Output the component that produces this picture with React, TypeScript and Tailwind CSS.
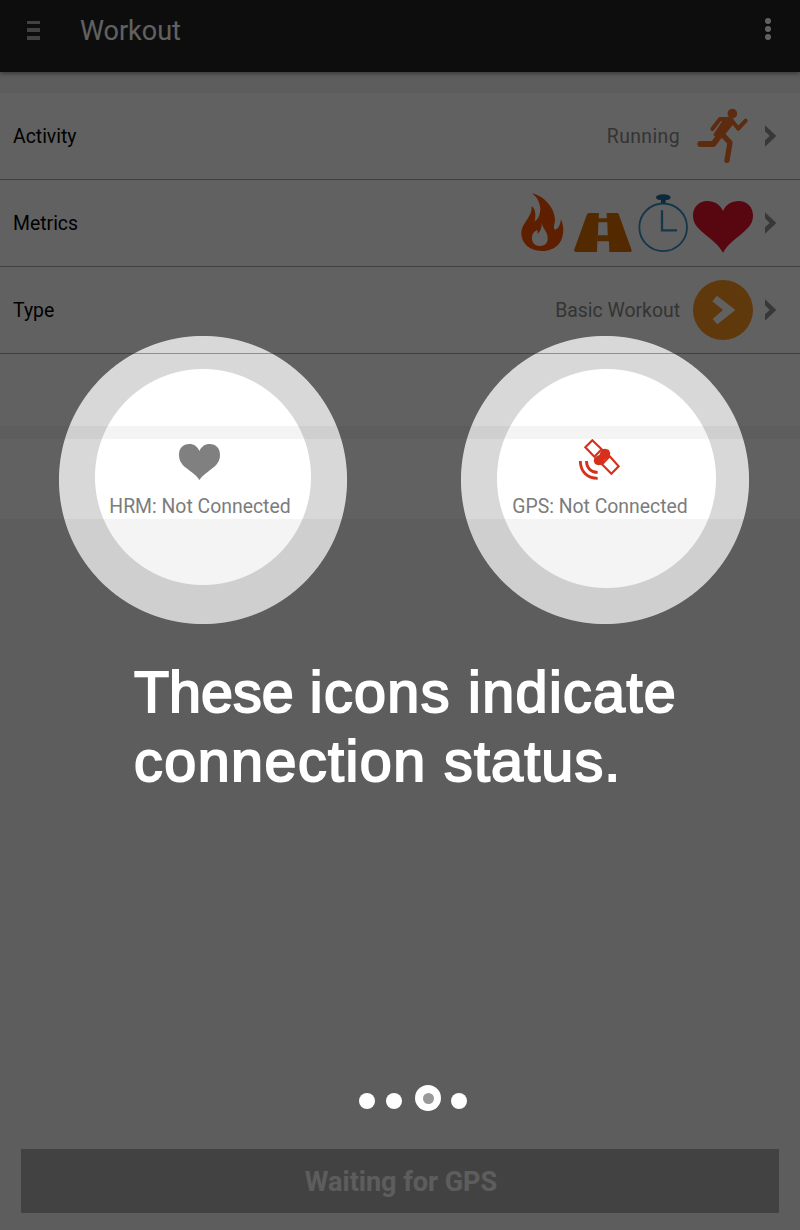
import type { ReactNode } from "react";

function Chevron() {
  return (
    <svg className="ml-3 h-[22px] w-3 shrink-0" viewBox="0 0 36 66" fill="#929292">
      <path d="M0 1 34 33 0 65V46L14 33 0 19Z" />
    </svg>
  );
}

function Row({ label, children }: { label: string; children: ReactNode }) {
  return (
    <div className="flex h-[87px] items-center border-b border-[#a8a8a8] bg-white pr-[23px] pl-[13px]">
      <span className="grow pt-0.5 text-[19.4px] text-black">{label}</span>
      {children}
      <Chevron />
    </div>
  );
}

function RunnerIcon() {
  return (
    <svg className="ml-[13px] h-[60px] w-[60px]" viewBox="579 318 180 180" fill="none" stroke="#f2702a" strokeLinecap="round" strokeLinejoin="round">
      <circle cx="697" cy="341" r="14.5" fill="#f2702a" stroke="none" />
      <path d="M688 357H660L637 387M696 362 715 386 737 362" strokeWidth="12" />
      <path d="M601 432H640L660 405" strokeWidth="18" />
      <path d="M664 400 690 428 681 481" strokeWidth="16" />
      <path d="M674 358 697 358 698 370 670 404 655 415 644 404Z" fill="#f2702a" strokeWidth="7" />
    </svg>
  );
}

function FlameIcon() {
  return (
    <svg className="h-[60px] w-[45px]" viewBox="30 39 135 180" fill="#f85200" fillRule="evenodd">
      <path d="M66 40C98 46 137 82 135 124C131 138 131 149 136 149C145 146 153 132 152 117C162 136 163 160 153 182C143 202 120 213 95 213C64 213 33 194 34 157C35 128 68 111 65 78C76 88 79 104 74 124C84 119 90 106 91 88C90 67 82 53 66 40ZM95 128C98 147 115 156 113 178C112 191 103 198 90 198C75 198 66 189 66 175C66 160 73 154 82 150C83 154 83 158 83 162C91 153 96 143 95 128Z" />
    </svg>
  );
}

function RoadIcon() {
  return (
    <svg className="ml-[9px] h-[60px] w-[58px]" viewBox="192 39 174 180" fill="#db6c00">
      <path d="M236 99H267L266 115V127H265L264 166H263L261 212 260 216H196L192 211 231 103ZM290 99H321Q325 99 326 102L365 211Q366 216 361 216H298L296 166H293L292 127H291Z" />
      <path d="M264 115H294V127H264ZM262 166H297V184H262Z" />
    </svg>
  );
}

function StopwatchIcon() {
  return (
    <svg className="ml-1.5 h-[60px] w-[50px]" viewBox="384 39 150 180" fill="none" stroke="#3490c0">
      <circle cx="459.500" cy="142" r="71.500" strokeWidth="5.500" />
      <path d="M456 91V151H501" strokeWidth="7" />
      <path d="M438 52C440 40 480 40 482 52C482 58 474 60 467 61V70H453V61C446 60 438 58 438 52Z" fill="#236f98" stroke="none" />
    </svg>
  );
}

function HeartIcon() {
  return (
    <svg className="ml-[5px] h-[60px] w-[60px]" viewBox="549 39 180 180" fill="#e8102a">
      <path d="M639 218C626 195 604 178 583 161C561 143 549 130 549 106C549 80 568 63 592 63C613 63 631 74 639 93C647 74 665 63 686 63C710 63 729 80 729 106C729 130 717 143 695 161C674 178 652 195 639 218Z" />
    </svg>
  );
}

function GoIcon() {
  return (
    <svg className="ml-[13px] h-[60px] w-[60px]" viewBox="549 300 180 180">
      <circle cx="639" cy="390" r="90" fill="#fa9620" />
      <path d="M621 347 676 390 622 433 608 417 639 390 607 364Z" fill="#fff" />
    </svg>
  );
}

function HrmIcon() {
  return (
    <svg className="h-[41px] w-[41px]" viewBox="387 342 123 123" fill="#808080">
      <path d="M448 465C440 451 425 443 410 430C395 418 387 407 387 389C387 370 399 357 418 357C432 357 443 365 448 378C454 365 465 357 479 357C498 357 510 370 510 389C510 407 502 418 487 430C472 443 457 451 448 465Z" />
    </svg>
  );
}

function SatelliteIcon() {
  return (
    <svg className="h-[41px] w-[41px]" viewBox="57 42 123 123" fill="none" stroke="#d7301a">
      <path d="M97 46 76 67 103 95 125 73ZM149 94 176 124 154 146 126 118Z" strokeWidth="6.500" />
      <path d="M122 80 126 73 135 71 146 74 151 84 149 94 140 101 134 104 132 112 125 119 115 121 105 117 101 108 103 99 111 93 118 90Z" fill="#d7301a" stroke="none" />
      <path d="M61 108C61 139 81 160 113 160M79.500 108C79.500 128 92 142 113 142" strokeWidth="8.500" />
    </svg>
  );
}

function Status({ text, children }: { text: string; children: ReactNode }) {
  return (
    <div className="flex w-1/2 flex-col items-center">
      <div className="pr-px">{children}</div>
      <span className="mt-[15px] text-[19.400px] leading-6 whitespace-nowrap text-[#7c7c7c]">{text}</span>
    </div>
  );
}

export default function App() {
  return (
    <div className="relative flex h-[1230px] w-[800px] flex-col overflow-hidden bg-[#f4f4f4] font-['Roboto',sans-serif]">
      <header className="z-0 flex h-[72px] shrink-0 items-center bg-[#222] pr-[29px] pb-[11px] pl-[27px] shadow-[0_1px_5px_rgba(0,0,0,0.5)]">
        <div className="flex w-[13px] flex-col gap-1">
          <div className="h-[3px] bg-[#aaa]" />
          <div className="h-1 bg-[#aaa]" />
          <div className="h-1 bg-[#aaa]" />
        </div>
        <h1 className="ml-10 grow text-[27px] leading-8 text-white">Workout</h1>
        <div className="flex flex-col gap-0.5 pb-1">
          <div className="h-1.5 w-1.5 rounded-full bg-white" />
          <div className="h-1.5 w-1.5 rounded-full bg-white" />
          <div className="h-1.5 w-1.5 rounded-full bg-white" />
        </div>
      </header>

      <main className="flex grow flex-col pt-[21px]">
        <Row label="Activity">
          <span className="pt-0.5 text-[19.400px] tracking-[0.4px] text-[#888]">Running</span>
          <RunnerIcon />
        </Row>
        <Row label="Metrics">
          <FlameIcon />
          <RoadIcon />
          <StopwatchIcon />
          <HeartIcon />
        </Row>
        <Row label="Type">
          <span className="pt-0.5 text-[19.400px] text-[#888]">Basic Workout</span>
          <GoIcon />
        </Row>
        <div className="h-[72px] bg-white" />
        <div className="mt-[13px] flex h-20 bg-white">
          <Status text="HRM: Not Connected">
            <HrmIcon />
          </Status>
          <Status text="GPS: Not Connected">
            <SatelliteIcon />
          </Status>
        </div>
        <button className="mx-[21px] mt-auto mb-[17px] h-16 bg-[#adadad] pt-0.5 pl-0.5 text-[27px] font-bold text-[#f4f4f4]">Waiting for GPS</button>
      </main>

      <div className="absolute inset-0 flex">
        <div className="w-1/2 bg-[radial-gradient(circle_at_203px_480px,transparent_143.5px,rgba(0,0,0,0.62)_144.5px)]" />
        <div className="w-1/2 bg-[radial-gradient(circle_at_205px_480px,transparent_143.5px,rgba(0,0,0,0.62)_144.5px)]" />
      </div>
      <div className="absolute top-[336px] left-[59px] h-72 w-72 rounded-full bg-[radial-gradient(circle_at_144px_141px,transparent_107.5px,rgba(0,0,0,0.153)_108.5px)]" />
      <div className="absolute top-[336px] left-[461px] h-72 w-72 rounded-full bg-[radial-gradient(circle_at_145.5px_142.5px,transparent_109px,rgba(0,0,0,0.153)_110px)]" />

      <div className="absolute inset-0 flex flex-col justify-between pt-[658px] pb-[119px]">
        <p className="pl-[134px] font-['Liberation_Sans',sans-serif] text-[57.500px] leading-[68.500px] whitespace-nowrap text-white [-webkit-text-stroke:1.900px_white]">
          <span>These </span>
          <span className="tracking-[1.350px]">icons indicate</span>
          <br />
          <span className="tracking-[1.450px]">connection </span>
          <span className="tracking-[1.150px]">status.</span>
        </p>
        <div className="flex items-end pl-[359px]">
          <div className="mb-0.5 h-4 w-4 rounded-full bg-white" />
          <div className="mb-0.5 ml-[11px] h-4 w-4 rounded-full bg-white" />
          <div className="ml-[13px] flex h-[26px] w-[26px] items-center justify-center rounded-full bg-white">
            <div className="h-[11px] w-[11px] rounded-full bg-[#999]" />
          </div>
          <div className="mb-0.5 ml-2.5 h-4 w-4 rounded-full bg-white" />
        </div>
      </div>
    </div>
  );
}
